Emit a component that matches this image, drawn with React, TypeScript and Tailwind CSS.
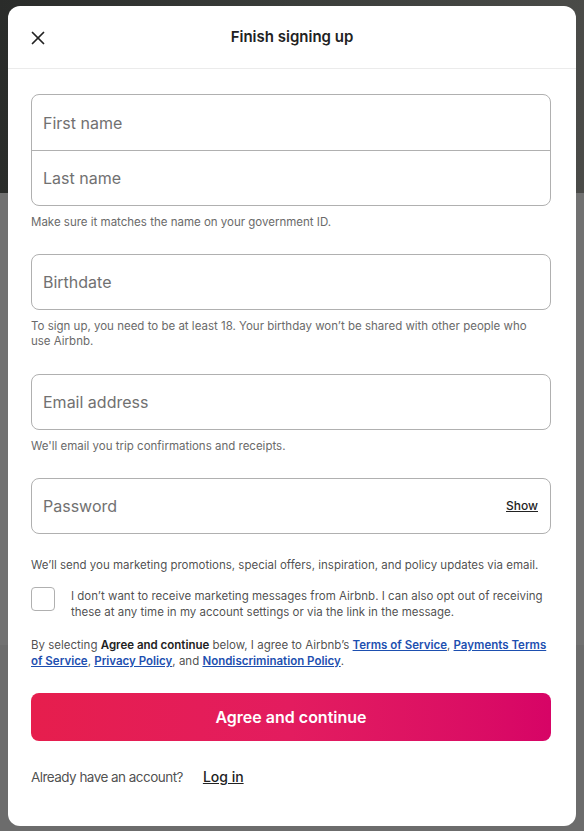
import { X } from "lucide-react";

const font = { fontFamily: "Inter, 'Noto Sans', sans-serif" };

function Field({ label, right }: { label: string; right?: string }) {
  return (
    <div className="flex h-14 items-center justify-between rounded-lg border border-[#b0b0b0] pl-[11px] pr-3">
      <span className="text-base text-[#717171]">{label}</span>
      {right && <span className="text-[12px] font-medium text-[#222] underline">{right}</span>}
    </div>
  );
}

function Help({ children, className = "" }: { children: React.ReactNode; className?: string }) {
  return <p className={`mt-[9px] text-[11.5px] leading-[15px] text-[#6a6a6a] ${className}`}>{children}</p>;
}

export default function App() {
  return (
    <div className="relative h-[831px] w-[584px] overflow-hidden bg-[#717171]" style={font}>
      {/* page behind the overlay */}
      <div className="h-[193px] bg-gradient-to-r from-[#2a2c2a] via-[#3a3d3a] to-[#4a4b48]" />
      <div className="h-[452px] bg-[#717171]" />
      <div className="h-[186px] bg-[#6c6c6c]" />

      <section className="absolute left-2 top-[6px] flex h-[820px] w-[568px] flex-col rounded-xl bg-white">
        <header className="relative flex h-[63px] items-center justify-center border-b border-[#ebebeb]">
          <button className="absolute left-[14px] top-[16px] flex h-8 w-8 items-center justify-center text-[#222]">
            <X size={22} strokeWidth={1.9} />
          </button>
          <h2 className="text-[15px] font-semibold text-[#222]">Finish signing up</h2>
        </header>

        <div className="pl-[23px] pr-[25px] pt-[25px]">
          <div className="rounded-lg border border-[#b0b0b0]">
            <div className="flex h-14 items-center border-b border-[#b0b0b0] pl-[11px]">
              <span className="text-base text-[#717171]">First name</span>
            </div>
            <div className="flex h-[54px] items-center pl-[11px]">
              <span className="text-base text-[#717171]">Last name</span>
            </div>
          </div>
          <Help>Make sure it matches the name on your government ID.</Help>

          <div className="mt-[24px]">
            <Field label="Birthdate" />
          </div>
          <Help className="pr-[16px]">
            To sign up, you need to be at least 18. Your birthday won’t be shared with other people who use Airbnb.
          </Help>

          <div className="mt-[25px]">
            <Field label="Email address" />
          </div>
          <Help>We'll email you trip confirmations and receipts.</Help>

          <div className="mt-[24px]">
            <Field label="Password" right="Show" />
          </div>

          <p className="mt-6 text-[11.5px] leading-[15px] text-[#222]/80">
            We’ll send you marketing promotions, special offers, inspiration, and policy updates via email.
          </p>

          <div className="mt-[14px] flex gap-4">
            <span className="h-6 w-6 shrink-0 rounded border border-[#b0b0b0]" />
            <span className="pt-[1px] text-[11.5px] leading-4 text-[#222]/80">
              I don’t want to receive marketing messages from Airbnb. I can also opt out of receiving these at any time in my account settings or via the link in the message.
            </span>
          </div>

          <p className="mt-[17px] text-[11.5px] leading-4 text-[#222]/80">
            By selecting <b className="font-semibold text-[#222]">Agree and continue</b> below, I agree to Airbnb’s{" "}
            <a className="font-semibold text-[#1d4fb0] underline">Terms of Service</a>,{" "}
            <a className="font-semibold text-[#1d4fb0] underline">Payments Terms of Service</a>,{" "}
            <a className="font-semibold text-[#1d4fb0] underline">Privacy Policy</a>, and{" "}
            <a className="font-semibold text-[#1d4fb0] underline">Nondiscrimination Policy</a>.
          </p>

          <button className="mt-[24px] h-12 w-full rounded-lg bg-gradient-to-r from-[#e61e4d] via-[#e31c5f] to-[#d70466] text-[16px] font-semibold text-white">
            Agree and continue
          </button>

          <p className="mt-[25px] flex items-baseline text-[13.5px] tracking-[-0.04em] text-[#222]/80">
            <span>Already have an account?</span>
            <a className="ml-[20px] text-[14px] font-medium tracking-normal text-[#222] underline">Log in</a>
          </p>
        </div>
      </section>
    </div>
  );
}
